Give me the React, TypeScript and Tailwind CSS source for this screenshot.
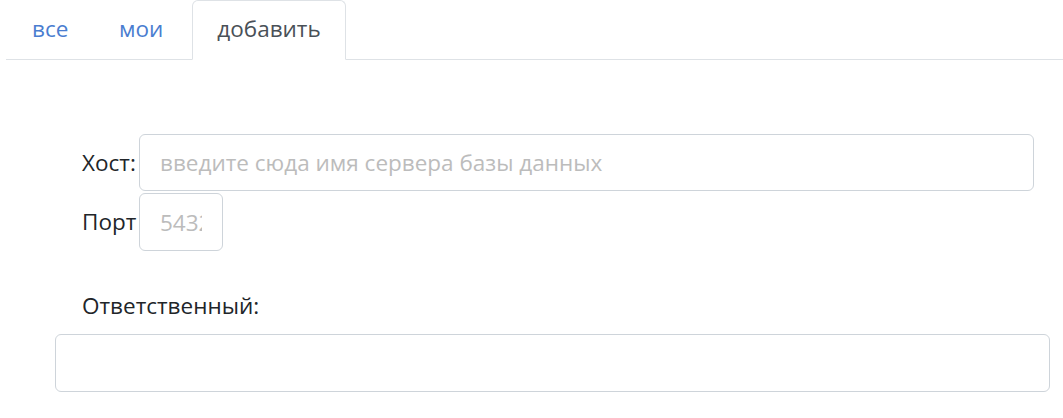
import React from "react";

export default function App() {
  const font = { fontFamily: '"Open Sans", "Noto Sans", sans-serif' };
  return (
    <div className="w-[1063px] h-[418px] bg-white overflow-hidden text-[#212529]" style={font}>
      <div className="flex items-end h-[60px] ml-[6px] border-b border-[#dee2e6]">
        <a className="flex items-center h-[59px] w-[90px] pl-[26px] pb-[2px] text-[22.5px] text-[#4a7dd0]">все</a>
        <a className="flex items-center h-[59px] w-[93px] pl-[23px] pb-[2px] text-[22.5px] text-[#4a7dd0]">мои</a>
        <a className="flex items-center justify-center h-[60px] w-[154px] ml-[3px] -mb-px pb-[2px] text-[22.5px] text-[#495057] bg-white border border-b-white border-[#dee2e6] rounded-t-[6px]">добавить</a>
      </div>
      <div className="pt-[74px]">
        <div className="flex flex-col gap-[2px] pl-[82px] pr-[29px]">
          <div className="flex items-center">
            <label className="w-[57px] shrink-0 text-[22.5px] whitespace-nowrap">Хост:</label>
            <input
              className="flex-1 h-[57px] px-[20px] text-[22.5px] border border-[#ced4da] rounded-[6px] placeholder:text-[#bcbcbc] outline-none"
              placeholder="введите сюда имя сервера базы данных"
              style={font}
            />
          </div>
          <div className="flex items-center">
            <label className="w-[57px] shrink-0 text-[22.5px] whitespace-nowrap">Порт</label>
            <input
              className="w-[84px] h-[58px] px-[20px] text-[22.5px] border border-[#ced4da] rounded-[6px] placeholder:text-[#bcbcbc] outline-none"
              placeholder="5432"
              style={font}
            />
          </div>
        </div>
        <div className="pl-[82px] mt-[40px] text-[22.5px] leading-[30px]">Ответственный:</div>
        <div className="pl-[55px] pr-[13px] mt-[13px]">
          <input className="w-full h-[58px] px-[20px] text-[22.5px] border border-[#ced4da] rounded-[6px] outline-none" style={font} />
        </div>
      </div>
    </div>
  );
}
